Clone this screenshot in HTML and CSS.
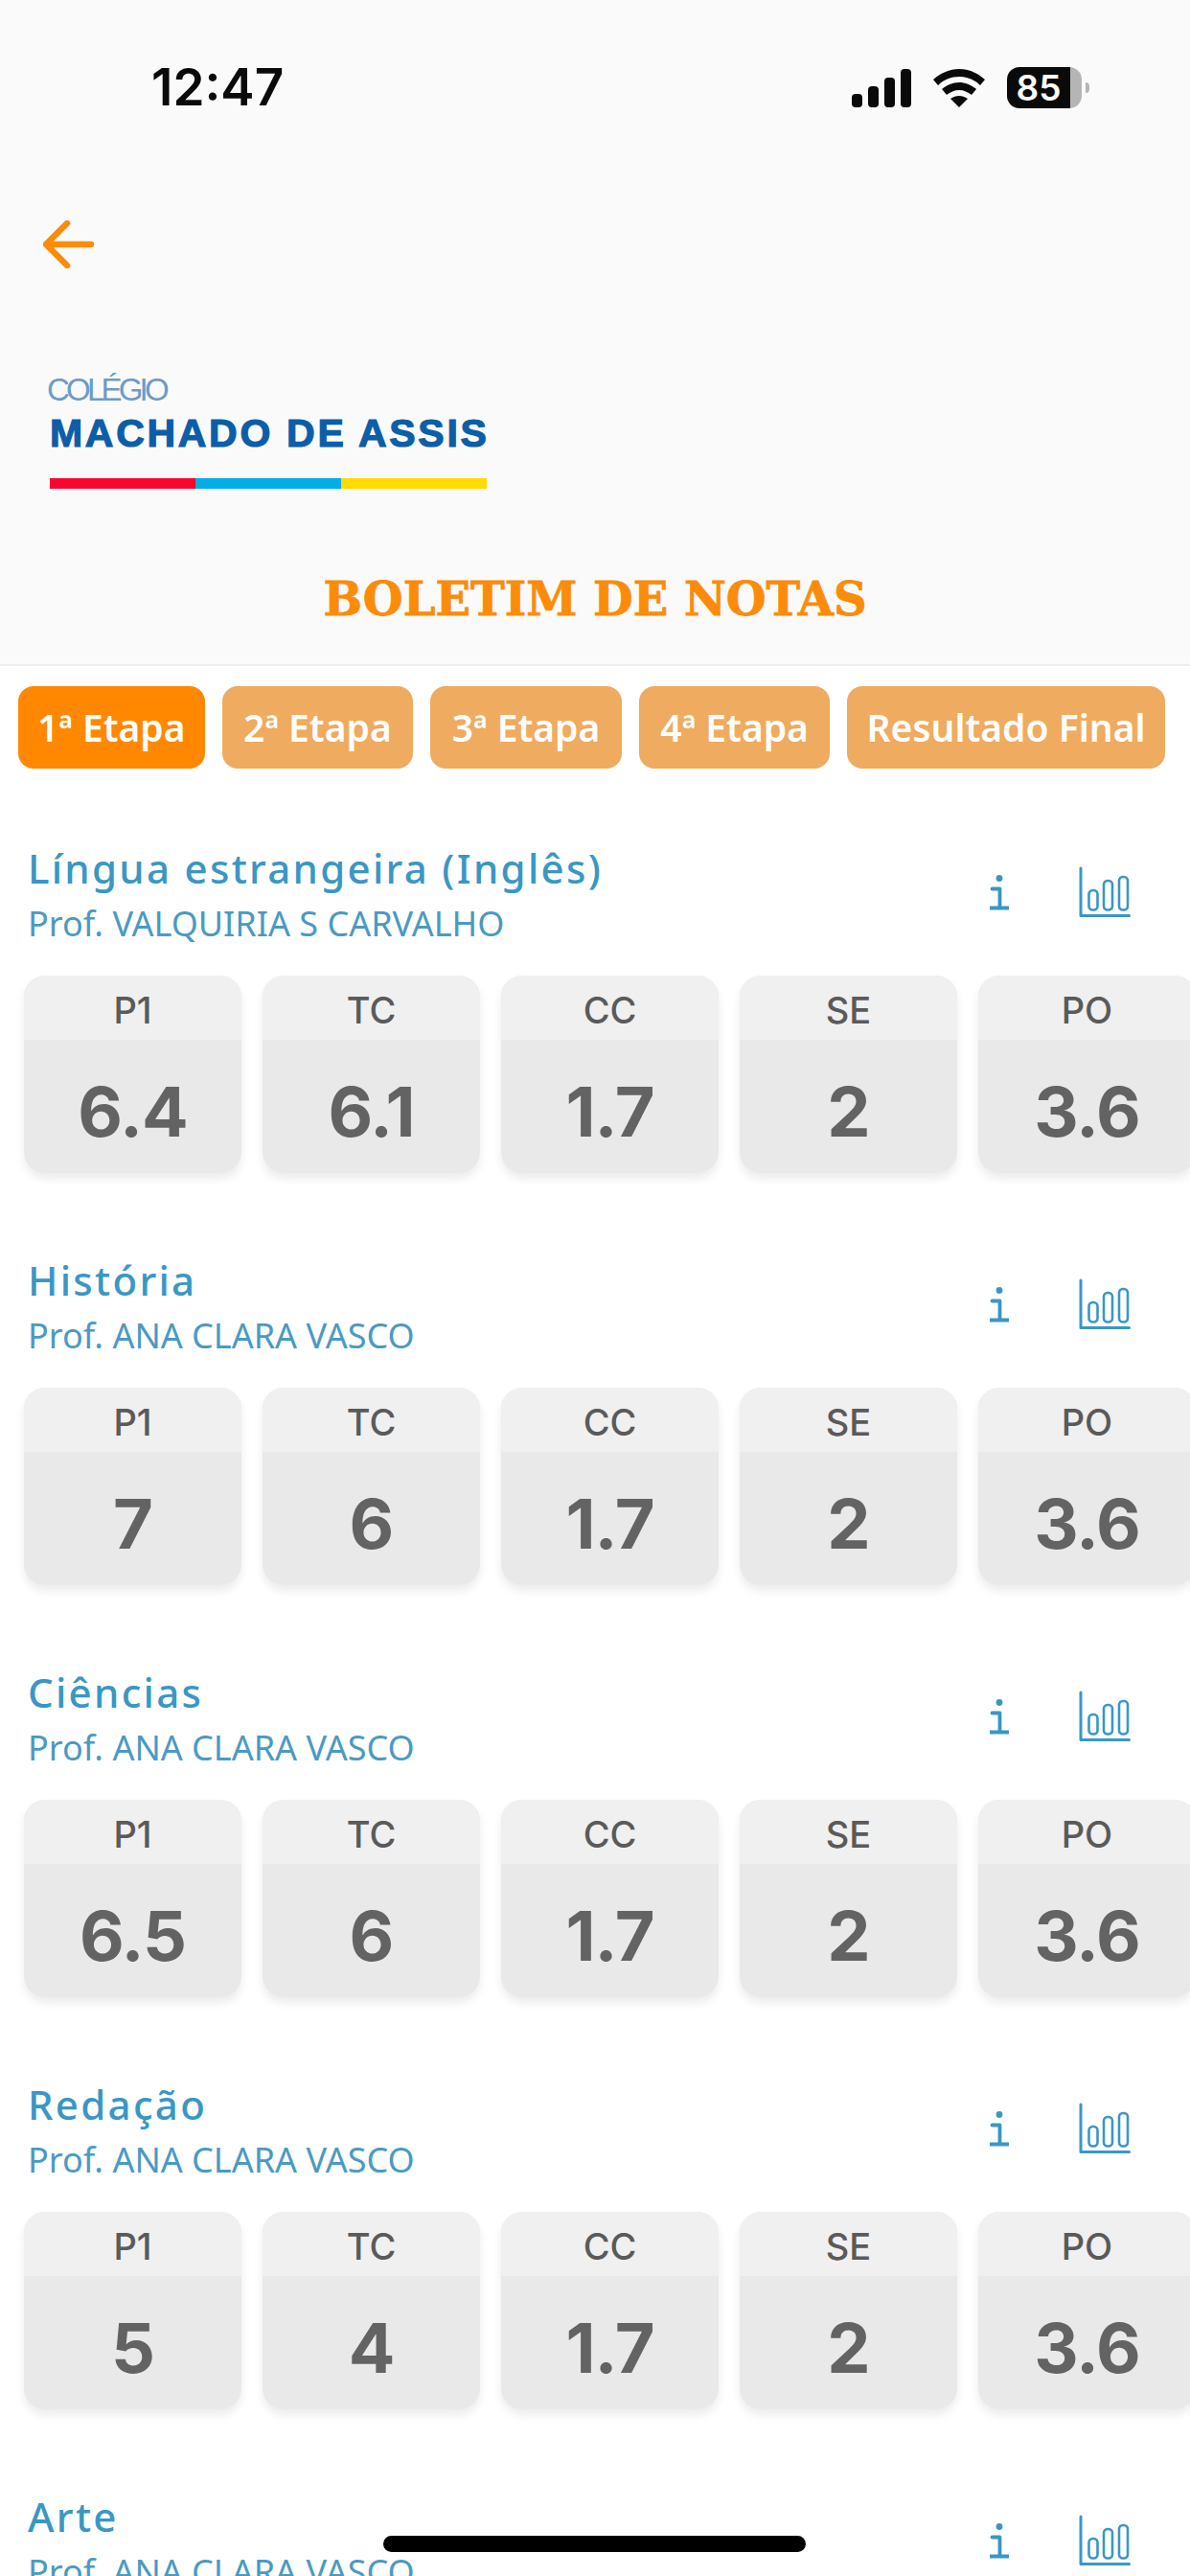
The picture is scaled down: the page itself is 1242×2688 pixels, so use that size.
FILE: index.html
```html
<!DOCTYPE html>
<html lang="pt-BR">
<head>
  <meta charset="UTF-8" />
  <meta name="viewport" content="width=device-width, initial-scale=1.0"/>
  <title>Boletim de Notas</title>
  <link rel="stylesheet" href="styles.css">
</head>
<body>
  <svg class="defs" width="0" height="0">
    <symbol id="icon-info" viewBox="0 0 20 37">
      <circle cx="10" cy="3.5" r="3.4" fill="currentColor"/>
      <path d="M2.5 14.5H10.5V34.5M1 34.5H19.5" fill="none" stroke="currentColor" stroke-width="3.8" stroke-linecap="round" stroke-linejoin="round"/>
    </symbol>
    <symbol id="icon-chart" viewBox="0 0 54 54">
      <path d="M2 2V51.5H52.5" fill="none" stroke="currentColor" stroke-width="3" stroke-linecap="round" stroke-linejoin="round"/>
      <rect x="10.5" y="25" width="9" height="20.5" rx="4" fill="none" stroke="currentColor" stroke-width="2.6"/>
      <rect x="26" y="15" width="9" height="30.5" rx="4" fill="none" stroke="currentColor" stroke-width="2.6"/>
      <rect x="42" y="11" width="9" height="34.5" rx="4" fill="none" stroke="currentColor" stroke-width="2.6"/>
    </symbol>
  </svg>

  <header class="top">
    <div class="status-bar">
      <span class="clock">12:47</span>
      <div class="status-icons">
        <svg class="signal" width="62" height="40" viewBox="0 0 62 40">
          <rect x="0" y="26" width="11" height="14" rx="4"/>
          <rect x="17" y="18" width="11" height="22" rx="4"/>
          <rect x="34" y="9" width="11" height="31" rx="4"/>
          <rect x="51" y="0" width="11" height="40" rx="4"/>
        </svg>
        <svg class="wifi" width="54" height="40" viewBox="0 0 54 40">
          <path d="M27 0C17 0 8 4 0 11L5 17C11 11 19 8 27 8C35 8 43 11 49 17L54 11C46 4 37 0 27 0Z"/>
          <path d="M27 14C20 14 14 17 9 21L14 27C18 24 22 22 27 22C32 22 36 24 40 27L45 21C40 17 34 14 27 14Z"/>
          <path d="M27 28C24 28 21 29 18 31L27 40L36 31C33 29 30 28 27 28Z"/>
        </svg>
        <div class="battery">
          <div class="battery-body"><span class="battery-level">85</span></div>
          <div class="battery-tip"></div>
        </div>
      </div>
    </div>

    <a class="back" href="#">
      <svg width="54" height="50" viewBox="0 0 54 50"><path d="M25 3L3 25L25 47M3 25H50" fill="none" stroke="#fa8c0a" stroke-width="6.5" stroke-linecap="round" stroke-linejoin="round"/></svg>
    </a>

    <div class="logo">
      <div class="logo-small">COLÉGIO</div>
      <div class="logo-big">MACHADO DE ASSIS</div>
      <div class="logo-bar"><span class="red"></span><span class="blue"></span><span class="yellow"></span></div>
    </div>

    <h1 class="page-title">BOLETIM DE NOTAS</h1>
  </header>

  <nav class="tabs">
    <a class="tab active" href="#">1ª Etapa</a>
    <a class="tab" href="#">2ª Etapa</a>
    <a class="tab" href="#">3ª Etapa</a>
    <a class="tab" href="#">4ª Etapa</a>
    <a class="tab" href="#">Resultado Final</a>
  </nav>

  <main>
    <section class="subject">
      <div class="subject-head">
        <div class="subject-text">
          <h2>Língua estrangeira (Inglês)</h2>
          <p>Prof. VALQUIRIA S CARVALHO</p>
        </div>
        <svg class="icon-info"><use href="#icon-info"/></svg>
        <svg class="icon-chart"><use href="#icon-chart"/></svg>
      </div>
      <div class="grades">
        <div class="grade"><div class="grade-label">P1</div><div class="grade-value">6.4</div></div>
        <div class="grade"><div class="grade-label">TC</div><div class="grade-value">6.1</div></div>
        <div class="grade"><div class="grade-label">CC</div><div class="grade-value">1.7</div></div>
        <div class="grade"><div class="grade-label">SE</div><div class="grade-value">2</div></div>
        <div class="grade"><div class="grade-label">PO</div><div class="grade-value">3.6</div></div>
      </div>
    </section>

    <section class="subject">
      <div class="subject-head">
        <div class="subject-text">
          <h2>História</h2>
          <p>Prof. ANA CLARA VASCO</p>
        </div>
        <svg class="icon-info"><use href="#icon-info"/></svg>
        <svg class="icon-chart"><use href="#icon-chart"/></svg>
      </div>
      <div class="grades">
        <div class="grade"><div class="grade-label">P1</div><div class="grade-value">7</div></div>
        <div class="grade"><div class="grade-label">TC</div><div class="grade-value">6</div></div>
        <div class="grade"><div class="grade-label">CC</div><div class="grade-value">1.7</div></div>
        <div class="grade"><div class="grade-label">SE</div><div class="grade-value">2</div></div>
        <div class="grade"><div class="grade-label">PO</div><div class="grade-value">3.6</div></div>
      </div>
    </section>

    <section class="subject">
      <div class="subject-head">
        <div class="subject-text">
          <h2>Ciências</h2>
          <p>Prof. ANA CLARA VASCO</p>
        </div>
        <svg class="icon-info"><use href="#icon-info"/></svg>
        <svg class="icon-chart"><use href="#icon-chart"/></svg>
      </div>
      <div class="grades">
        <div class="grade"><div class="grade-label">P1</div><div class="grade-value">6.5</div></div>
        <div class="grade"><div class="grade-label">TC</div><div class="grade-value">6</div></div>
        <div class="grade"><div class="grade-label">CC</div><div class="grade-value">1.7</div></div>
        <div class="grade"><div class="grade-label">SE</div><div class="grade-value">2</div></div>
        <div class="grade"><div class="grade-label">PO</div><div class="grade-value">3.6</div></div>
      </div>
    </section>

    <section class="subject">
      <div class="subject-head">
        <div class="subject-text">
          <h2>Redação</h2>
          <p>Prof. ANA CLARA VASCO</p>
        </div>
        <svg class="icon-info"><use href="#icon-info"/></svg>
        <svg class="icon-chart"><use href="#icon-chart"/></svg>
      </div>
      <div class="grades">
        <div class="grade"><div class="grade-label">P1</div><div class="grade-value">5</div></div>
        <div class="grade"><div class="grade-label">TC</div><div class="grade-value">4</div></div>
        <div class="grade"><div class="grade-label">CC</div><div class="grade-value">1.7</div></div>
        <div class="grade"><div class="grade-label">SE</div><div class="grade-value">2</div></div>
        <div class="grade"><div class="grade-label">PO</div><div class="grade-value">3.6</div></div>
      </div>
    </section>

    <section class="subject">
      <div class="subject-head">
        <div class="subject-text">
          <h2>Arte</h2>
          <p>Prof. ANA CLARA VASCO</p>
        </div>
        <svg class="icon-info"><use href="#icon-info"/></svg>
        <svg class="icon-chart"><use href="#icon-chart"/></svg>
      </div>
    </section>
  </main>

  <div class="home-indicator"></div>
</body>
</html>
```

FILE: styles.css
```css
/* Base */
html, body { margin:0; padding:0; }
body { position:relative; width:1242px; height:2688px; overflow:hidden; background:#fff; font-family:"Noto Sans", sans-serif; }
a { text-decoration:none; color:inherit; }
.defs { position:absolute; }

/* Header */
.top { height:693px; background:#fafafa; border-bottom:2px solid #efefef; }
.status-bar { display:flex; justify-content:space-between; align-items:center; height:43px; padding:70px 105px 0 158px; }
.clock { font-family:Inter, sans-serif; font-size:53px; font-weight:600; line-height:43px; color:#0a0a0a; }
.status-icons { display:flex; align-items:center; gap:23px; }
.status-icons svg { display:block; fill:#0a0a0a; }
.battery { display:flex; align-items:center; gap:4px; }
.battery-body { width:78px; height:43px; border-radius:13px; overflow:hidden; background:linear-gradient(90deg, #0a0a0a 66px, #b5b5b5 66px); }
.battery-level { display:block; width:66px; text-align:center; font-family:Inter, sans-serif; font-size:37px; font-weight:600; line-height:43px; color:#fff; }
.battery-tip { width:4px; height:11px; border-radius:0 4px 4px 0; background:#b5b5b5; }

.back { display:block; width:54px; height:50px; margin:117px 0 0 45px; }
.back svg { display:block; }

.logo { width:456px; margin:110px 0 0 52px; }
.logo-small { margin-left:-3px; font-family:"Liberation Sans", sans-serif; font-size:33px; line-height:34px; letter-spacing:-3.8px; color:#6b9bc9; }
.logo-big { margin-top:8px; font-family:"Liberation Sans", sans-serif; font-size:41px; font-weight:bold; line-height:40px; letter-spacing:2.7px; white-space:nowrap; color:#0b5ea8; -webkit-text-stroke:1.2px #0b5ea8; }
.logo-bar { display:flex; height:11px; margin-top:27px; }
.logo-bar span { flex:1; }
.logo-bar .red { background:#f9062f; }
.logo-bar .blue { background:#04ade6; }
.logo-bar .yellow { background:#ffdb00; }

.page-title { margin:90px 0 0; text-align:center; font-family:"DejaVu Serif", serif; font-size:48px; font-weight:bold; line-height:50px; white-space:nowrap; color:#fa8c0a; -webkit-text-stroke:0.8px #fa8c0a; }

/* Tabs */
.tabs { display:flex; gap:18px; padding:21px 0 0 19px; }
.tab { height:86px; padding:0 22.5px; border-radius:16px; background:#efab5f; color:#fff; font-size:39px; font-weight:600; line-height:86px; white-space:nowrap; }
.tab:first-child, .tab:last-child { padding:0 20px; }
.tab.active { background:#ff8800; }

/* Subjects */
main { padding-top:70px; }
.subject { height:430px; }
.subject-head { display:flex; align-items:flex-start; height:146px; padding:6px 62px 0 29px; box-sizing:border-box; color:#3a97c4; }
.subject-text { flex:1; }
.subject-text h2 { margin:0 0 10px; font-size:42px; font-weight:500; line-height:56px; letter-spacing:2.3px; }
.subject-text p { margin:0; font-size:36px; line-height:40px; color:#4a9ac2; }
.icon-info { width:20px; height:37px; margin:35px 73px 0 0; }
.icon-chart { width:54px; height:54px; margin-top:26px; }

/* Grade cards */
.grades { display:flex; gap:22px; padding-left:25px; }
.grade { flex:none; width:227px; height:206px; border-radius:22px; overflow:hidden; background:#e9e9e9; box-shadow:0 6px 10px rgba(0,0,0,0.08); color:#5a5a5a; text-align:center; font-family:Inter, sans-serif; }
.grade-label { height:67px; background:#f0f0f0; font-size:38px; font-weight:500; line-height:72px; }
.grade-value { font-size:72px; font-weight:700; line-height:150px; letter-spacing:-1px; color:#636363; }

/* Home indicator */
.home-indicator { position:absolute; left:400px; top:2646px; width:441px; height:17px; border-radius:9px; background:#000; box-shadow:0 0 3px #fff; }
```
